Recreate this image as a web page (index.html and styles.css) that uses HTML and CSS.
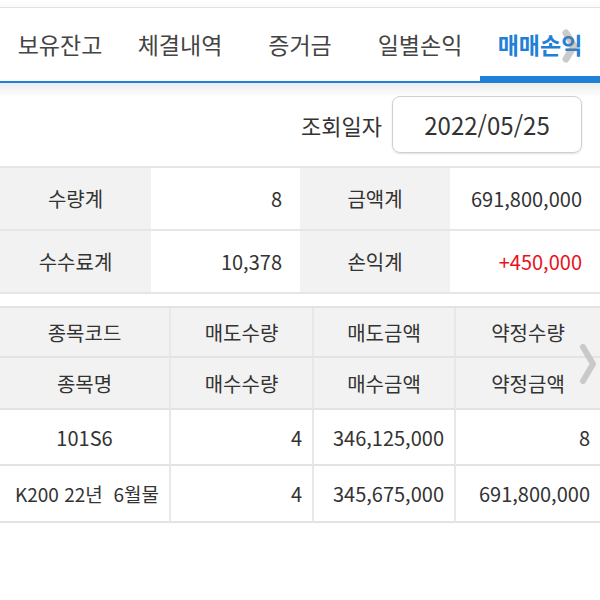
FILE: index.html
```html
<!DOCTYPE html>
<html lang="ko">
<head>
<meta charset="utf-8">
<title>매매손익</title>
<link rel="stylesheet" href="styles.css">
</head>
<body>
<div class="topline"></div>
<nav class="tabs">
  <div class="tab">보유잔고</div>
  <div class="tab">체결내역</div>
  <div class="tab">증거금</div>
  <div class="tab">일별손익</div>
  <div class="tab active">매매손익</div>
  <svg class="tab-chevron" width="18" height="36" viewBox="0 0 18 36"><path d="M5 5 L13 18 L5 31" fill="none" stroke="#7a7a7a" stroke-width="7" stroke-linecap="round" stroke-linejoin="round" opacity="0.4"/></svg>
</nav>
<div class="query">
  <span class="query-label">조회일자</span>
  <div class="date-box">2022/05/25</div>
</div>
<div class="summary">
  <div class="s-label">수량계</div>
  <div class="s-value">8</div>
  <div class="s-label">금액계</div>
  <div class="s-value">691,800,000</div>
  <div class="s-label">수수료계</div>
  <div class="s-value">10,378</div>
  <div class="s-label">손익계</div>
  <div class="s-value red">+450,000</div>
</div>
<div class="detail-wrap">
  <div class="detail">
    <div class="h h1">종목코드</div>
    <div class="h h1">매도수량</div>
    <div class="h h1">매도금액</div>
    <div class="h h1 last">약정수량</div>
    <div class="h h2">종목명</div>
    <div class="h h2">매수수량</div>
    <div class="h h2">매수금액</div>
    <div class="h h2 last">약정금액</div>
    <div class="d d1 center">101S6</div>
    <div class="d d1">4</div>
    <div class="d d1">346,125,000</div>
    <div class="d d1 last">8</div>
    <div class="d d2 name">K200 22년&nbsp;&nbsp;6월물</div>
    <div class="d d2">4</div>
    <div class="d d2">345,675,000</div>
    <div class="d d2 last">691,800,000</div>
  </div>
  <svg class="table-chevron" width="22" height="46" viewBox="0 0 22 46"><path d="M6 6 L16 23 L6 40" fill="none" stroke="#c9c9c9" stroke-width="6" stroke-linecap="round" stroke-linejoin="round"/></svg>
</div>
</body>
</html>
```
FILE: styles.css
```css
* { box-sizing: border-box; }
body {
  margin: 0;
  background: #fff;
  font-family: "Noto Sans CJK KR", "Noto Sans", sans-serif;
  color: #333;
}
.topline {
  height: 8px;
  border-bottom: 1px solid #e2e2e2;
  background: linear-gradient(#fff, #fafafa);
}
.tabs {
  position: relative;
  display: grid;
  grid-template-columns: repeat(5, 120px);
  height: 75px;
  border-bottom: 2px solid #1f80d8;
}
.tab {
  display: flex;
  align-items: center;
  justify-content: center;
  font-size: 23px;
  color: #444;
  padding-bottom: 2px;
  position: relative;
}
.tab.active {
  color: #1f80d8;
  font-weight: 700;
}
.tab.active::after {
  content: "";
  position: absolute;
  left: 0;
  right: 0;
  bottom: -2px;
  height: 7px;
  background: #1f80d8;
}
.tab-chevron {
  position: absolute;
  left: 561px;
  top: 20px;
}
.query {
  display: flex;
  align-items: center;
  justify-content: flex-end;
  gap: 10px;
  padding: 13px 18px 13px 0;
  background: linear-gradient(#ececec 0, #fff 14px);
}
.query-label {
  font-size: 22px;
  color: #333;
}
.date-box {
  width: 190px;
  height: 57px;
  border: 1px solid #cfcfcf;
  border-radius: 8px;
  box-shadow: 0 1px 2px rgba(0,0,0,0.12);
  display: flex;
  align-items: center;
  justify-content: center;
  font-size: 24px;
  color: #333;
}
.summary {
  display: grid;
  grid-template-columns: 151px 149px 150px 150px;
  grid-auto-rows: 63px;
  border-top: 2px solid #e6e6e6;
}
.summary > div {
  border-bottom: 2px solid #e6e6e6;
  display: flex;
  align-items: center;
  font-size: 20px;
}
.s-label {
  background: #f2f2f2;
  justify-content: center;
  color: #333;
}
.s-value {
  justify-content: flex-end;
  padding-right: 18px;
  color: #333;
}
.s-value.red { color: #e8121c; }
.detail-wrap {
  position: relative;
  margin-top: 12px;
}
.detail {
  display: grid;
  grid-template-columns: 171px 143px 142px 144px;
  grid-template-rows: 50px 52px 56px 57px;
  border-top: 2px solid #e3e3e3;
}
.detail > div {
  border-bottom: 2px solid #e3e3e3;
  border-right: 2px solid #e8e8e8;
  display: flex;
  align-items: center;
  font-size: 20px;
  color: #333;
}
.detail > div.last { border-right: none; }
.h {
  background: #f2f2f2;
  justify-content: center;
}
.d {
  justify-content: flex-end;
  padding-right: 10px;
}
.d.center { justify-content: center; padding-right: 0; }
.d.name {
  justify-content: flex-start;
  padding-left: 15px;
  font-size: 19px;
}
.table-chevron {
  position: absolute;
  left: 577px;
  top: 35px;
}
```
